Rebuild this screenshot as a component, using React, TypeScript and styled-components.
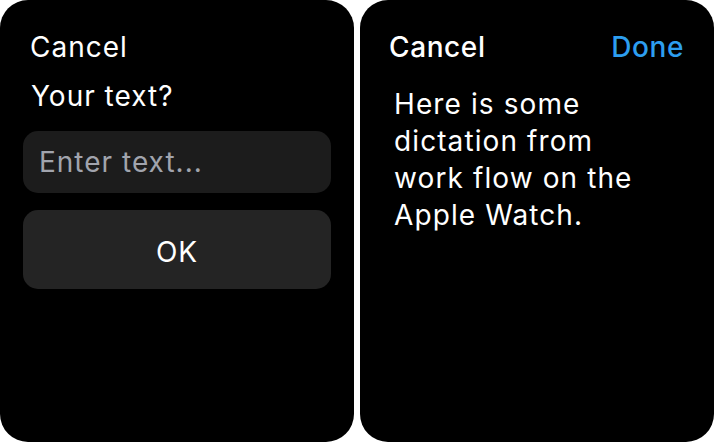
import * as React from "react"
import styled, { createGlobalStyle } from "styled-components"

const GlobalStyle = createGlobalStyle`
  html, body {
    margin: 0;
    padding: 0;
    background: #ffffff;
  }
  body {
    font-family: Inter, "Noto Sans", "Liberation Sans", sans-serif;
    -webkit-font-smoothing: antialiased;
  }
`

const Screens = styled.div`
  display: flex;
  gap: 6px;
  width: 714px;
  height: 442px;
`

const Watch = styled.div`
  width: 354px;
  height: 442px;
  background: #000000;
  border-radius: 28px;
  box-sizing: border-box;
  display: flex;
  flex-direction: column;
  padding: 30px 0 0 0;
  color: #ffffff;
`

const Header = styled.div<{ $inset: number }>`
  display: flex;
  justify-content: space-between;
  align-items: center;
  height: 34px;
  padding: 0 30px 0 ${(p) => p.$inset}px;
`

const NavLink = styled.span<{ $accent?: boolean; $bold?: boolean }>`
  font-size: 28px;
  line-height: 34px;
  letter-spacing: ${(p) => (p.$bold ? 0.6 : 1)}px;
  font-weight: ${(p) => (p.$bold ? 500 : 400)};
  color: ${(p) => (p.$accent ? "#2d9ef0" : "#ffffff")};
`

const Prompt = styled.p`
  margin: 15px 0 0 0;
  padding-left: 31px;
  font-size: 28px;
  line-height: 34px;
  letter-spacing: 1px;
`

const Form = styled.div`
  display: flex;
  flex-direction: column;
  gap: 17px;
  margin: 18px 23px 0 23px;
`

const TextField = styled.div`
  height: 62px;
  border-radius: 15px;
  background: #1c1c1c;
  display: flex;
  align-items: center;
  padding: 0 0 0 16px;
  font-size: 28px;
  line-height: 34px;
  letter-spacing: 1px;
  color: #a1a4ad;
`

const Button = styled.div`
  height: 79px;
  border-radius: 15px;
  background: #242424;
  display: flex;
  align-items: center;
  justify-content: center;
  box-sizing: border-box;
  padding-top: 5px;
  font-size: 28px;
  line-height: 34px;
  letter-spacing: 1px;
  color: #ffffff;
`

const Dictation = styled.p`
  margin: 22px 0 0 0;
  padding-left: 34px;
  font-size: 28px;
  line-height: 37px;
  letter-spacing: 1.1px;
`

export default function App() {
  return (
    <>
      <GlobalStyle />
      <Screens>
        <Watch>
          <Header $inset={30}>
            <NavLink>Cancel</NavLink>
          </Header>
          <Prompt>Your text?</Prompt>
          <Form>
            <TextField>Enter text...</TextField>
            <Button>OK</Button>
          </Form>
        </Watch>
        <Watch>
          <Header $inset={29}>
            <NavLink $bold>Cancel</NavLink>
            <NavLink $bold $accent>Done</NavLink>
          </Header>
          <Dictation>
            Here is some
            <br />
            dictation from
            <br />
            work flow on the
            <br />
            Apple Watch.
          </Dictation>
        </Watch>
      </Screens>
    </>
  )
}
